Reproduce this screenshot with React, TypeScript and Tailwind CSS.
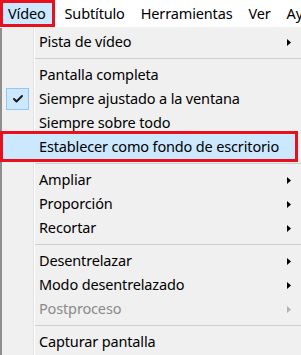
import { Check } from "lucide-react";

type Item =
  | { kind: "sep" }
  | { kind: "item"; label: string; sub?: boolean; checked?: boolean; disabled?: boolean; active?: boolean };

const MENU_BAR = ["Vídeo", "Subtítulo", "Herramientas", "Ver", "Ayuda"];

const ITEMS: Item[] = [
  { kind: "item", label: "Pista de vídeo", sub: true },
  { kind: "sep" },
  { kind: "item", label: "Pantalla completa" },
  { kind: "item", label: "Siempre ajustado a la ventana", checked: true },
  { kind: "item", label: "Siempre sobre todo" },
  { kind: "item", label: "Establecer como fondo de escritorio", active: true },
  { kind: "sep" },
  { kind: "item", label: "Ampliar", sub: true },
  { kind: "item", label: "Proporción", sub: true },
  { kind: "item", label: "Recortar", sub: true },
  { kind: "sep" },
  { kind: "item", label: "Desentrelazar", sub: true },
  { kind: "item", label: "Modo desentrelazado", sub: true },
  { kind: "item", label: "Postproceso", sub: true, disabled: true },
  { kind: "sep" },
  { kind: "item", label: "Capturar pantalla" },
];

function Arrow({ disabled }: { disabled?: boolean }) {
  return (
    <svg width="4" height="7" viewBox="0 0 4 7" className="shrink-0">
      <path d="M0 0 L4 3.5 L0 7 Z" fill={disabled ? "#b4b4b4" : "#000"} />
    </svg>
  );
}

export default function App() {
  return (
    <div
      className="relative h-[355px] w-[301px] overflow-hidden bg-[#f0f0f0] text-[14.5px] tracking-[-0.15px] text-black"
      style={{ fontFamily: '"Noto Sans", "Open Sans", sans-serif' }}
    >
      {/* barra de menús */}
      <div className="flex h-[28px] items-stretch whitespace-nowrap border-b border-[#f0f0f0] bg-white">
        {MENU_BAR.map((m, i) =>
          i === 0 ? (
            <div key={m} className="mr-[2px] border-[3px] border-[#e8101c]">
              <div className="flex h-full items-center bg-[#cce8ff] pl-[5px] pr-[6px]">{m}</div>
            </div>
          ) : (
            <div key={m} className="flex items-center px-[8px]">
              {m}
            </div>
          )
        )}
      </div>

      {/* menú desplegable */}
      <div className="flex h-[327px] border-l-2 border-[#8e8e8e] bg-[#f0f0f0] pt-[2px]">
        <div className="relative w-full">
          <div className="absolute bottom-0 left-[31px] top-[-2px] w-px bg-[#e2e2e2]" />
          <div className="absolute bottom-0 left-[32px] top-[-2px] w-px bg-white" />
          {ITEMS.map((it, i) =>
            it.kind === "sep" ? (
              <div key={i} className="flex h-[9px] items-center pl-[31px]">
                <div className="h-px w-full bg-[#cfcfcf]" />
              </div>
            ) : (
              <div key={i} className="relative flex h-[24px] items-center">
                {it.active && (
                  <div className="absolute bottom-[-3px] left-[-2px] right-[3px] top-[-4px] border-[3px] border-[#e8101c] bg-[#cce8ff]" />
                )}
                <div className="relative flex w-[31px] justify-center">
                  {it.checked && (
                    <div className="flex h-[22px] w-[23px] items-center justify-center border border-[#90c8f6] bg-[#cce8ff]">
                      <Check size={12} strokeWidth={4} color="#1a1a1a" />
                    </div>
                  )}
                </div>
                <span
                  className={`relative ml-[6px] flex-1 whitespace-nowrap ${
                    it.disabled ? "text-[#8a8a8a]" : "text-black"
                  }`}
                >
                  {it.label}
                </span>
                {it.sub && (
                  <div className="relative mr-[10px]">
                    <Arrow disabled={it.disabled} />
                  </div>
                )}
              </div>
            )
          )}
        </div>
      </div>
    </div>
  );
}
